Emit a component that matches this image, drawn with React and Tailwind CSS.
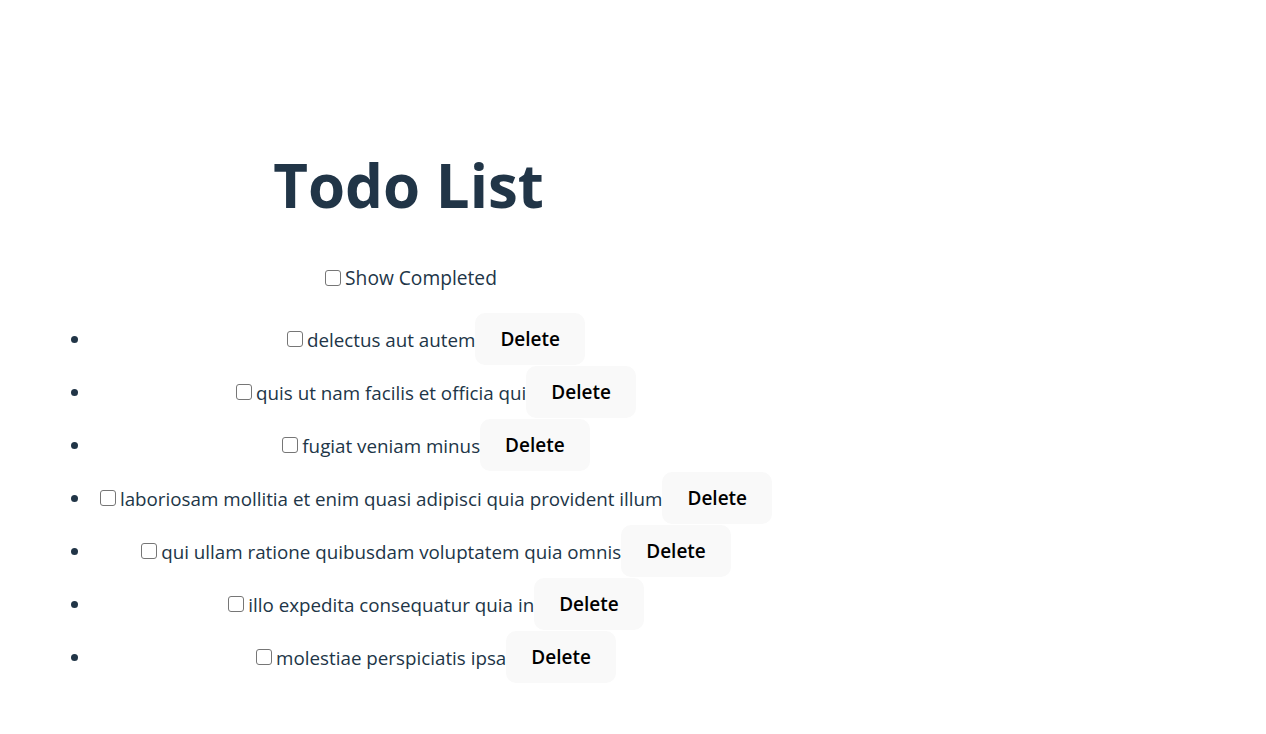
import React, { useState } from "react";

const initialTodos = [
  { id: 1, title: "delectus aut autem", completed: false },
  { id: 2, title: "quis ut nam facilis et officia qui", completed: false },
  { id: 3, title: "fugiat veniam minus", completed: false },
  { id: 4, title: "laboriosam mollitia et enim quasi adipisci quia provident illum", completed: false },
  { id: 5, title: "qui ullam ratione quibusdam voluptatem quia omnis", completed: false },
  { id: 6, title: "illo expedita consequatur quia in", completed: false },
  { id: 7, title: "molestiae perspiciatis ipsa", completed: false },
];

const Check = ({ checked, onChange }) => (
  <input
    type="checkbox"
    checked={checked}
    onChange={onChange}
    className="appearance-none w-4 h-4 ml-[5px] mr-[4px] border border-[#767676] rounded-[3px] bg-white checked:bg-[#0075ff] checked:border-[#0075ff] shrink-0"
  />
);

export default function App() {
  const [todos, setTodos] = useState(initialTodos);
  const [showCompleted, setShowCompleted] = useState(false);

  const toggle = (id) =>
    setTodos(todos.map((t) => (t.id === id ? { ...t, completed: !t.completed } : t)));
  const remove = (id) => setTodos(todos.filter((t) => t.id !== id));

  const visible = showCompleted ? todos : todos.filter((t) => !t.completed);

  return (
    <div className="bg-white min-h-screen">
      <div className="pt-[150px] pl-[42px] w-[775px] text-center text-[#213547] font-['Open_Sans',sans-serif] text-[19.2px]">
        <h1 className="h-[70px] leading-[70px] text-[60px] font-bold mb-[43px]">Todo List</h1>

        <div className="h-[30px] leading-[30px]">
          <label className="inline-flex items-center">
            <Check checked={showCompleted} onChange={() => setShowCompleted(!showCompleted)} />
            Show Completed
          </label>
        </div>

        {/* TODO ROWS */}
        <ul className="mt-5 pl-[50px] list-disc">
          {visible.map((todo) => (
            <li key={todo.id} className="h-[53px]">
              <div className="flex justify-center items-center h-[52px] whitespace-nowrap">
                <Check checked={todo.completed} onChange={() => toggle(todo.id)} />
                <span className="leading-[30px] mt-[2px] text-[18.8px]">{todo.title}</span>
                <button
                  onClick={() => remove(todo.id)}
                  className="h-[52px] px-6 leading-[50px] border border-transparent rounded-[10px] bg-[#f9f9f9] text-black font-semibold text-[19px]"
                >
                  Delete
                </button>
              </div>
            </li>
          ))}
        </ul>
      </div>
    </div>
  );
}
